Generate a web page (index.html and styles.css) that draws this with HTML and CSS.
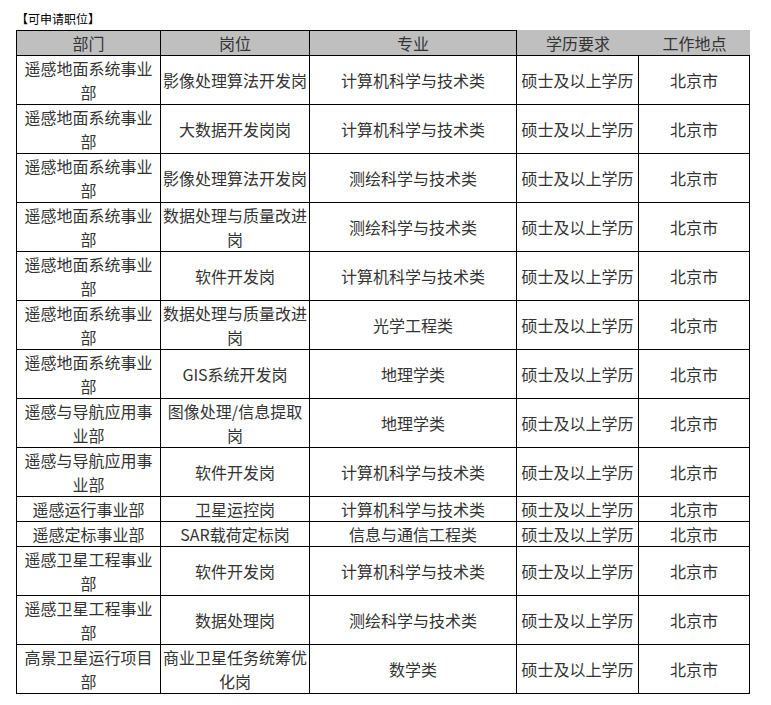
FILE: index.html
```html
<!DOCTYPE html>
<html lang="zh-CN">
<head>
<meta charset="utf-8">
<title>可申请职位</title>
<link rel="stylesheet" href="styles.css">
</head>
<body>
<div class="page">
  <p class="title">【可申请职位】</p>
  <table class="jobs">
    <thead>
      <tr>
        <th class="c1">部门</th>
        <th class="c2">岗位</th>
        <th class="c3">专业</th>
        <th class="c4 open">学历要求</th>
        <th class="c5 open">工作地点</th>
      </tr>
    </thead>
    <tbody>
      <tr><td>遥感地面系统事业部</td><td>影像处理算法开发岗</td><td>计算机科学与技术类</td><td>硕士及以上学历</td><td>北京市</td></tr>
      <tr><td>遥感地面系统事业部</td><td>大数据开发岗岗</td><td>计算机科学与技术类</td><td>硕士及以上学历</td><td>北京市</td></tr>
      <tr><td>遥感地面系统事业部</td><td>影像处理算法开发岗</td><td>测绘科学与技术类</td><td>硕士及以上学历</td><td>北京市</td></tr>
      <tr><td>遥感地面系统事业部</td><td>数据处理与质量改进岗</td><td>测绘科学与技术类</td><td>硕士及以上学历</td><td>北京市</td></tr>
      <tr><td>遥感地面系统事业部</td><td>软件开发岗</td><td>计算机科学与技术类</td><td>硕士及以上学历</td><td>北京市</td></tr>
      <tr><td>遥感地面系统事业部</td><td>数据处理与质量改进岗</td><td>光学工程类</td><td>硕士及以上学历</td><td>北京市</td></tr>
      <tr><td>遥感地面系统事业部</td><td>GIS系统开发岗</td><td>地理学类</td><td>硕士及以上学历</td><td>北京市</td></tr>
      <tr><td>遥感与导航应用事业部</td><td>图像处理/信息提取岗</td><td>地理学类</td><td>硕士及以上学历</td><td>北京市</td></tr>
      <tr><td>遥感与导航应用事业部</td><td>软件开发岗</td><td>计算机科学与技术类</td><td>硕士及以上学历</td><td>北京市</td></tr>
      <tr><td>遥感运行事业部</td><td>卫星运控岗</td><td>计算机科学与技术类</td><td>硕士及以上学历</td><td>北京市</td></tr>
      <tr><td>遥感定标事业部</td><td>SAR载荷定标岗</td><td>信息与通信工程类</td><td>硕士及以上学历</td><td>北京市</td></tr>
      <tr><td>遥感卫星工程事业部</td><td>软件开发岗</td><td>计算机科学与技术类</td><td>硕士及以上学历</td><td>北京市</td></tr>
      <tr><td>遥感卫星工程事业部</td><td>数据处理岗</td><td>测绘科学与技术类</td><td>硕士及以上学历</td><td>北京市</td></tr>
      <tr><td>高景卫星运行项目部</td><td>商业卫星任务统筹优化岗</td><td>数学类</td><td>硕士及以上学历</td><td>北京市</td></tr>
    </tbody>
  </table>
</div>
</body>
</html>
```

FILE: styles.css
```css
html, body {
  margin: 0;
  padding: 0;
  background: #ffffff;
}

.page {
  padding-left: 16px;
  font-family: "Microsoft YaHei", "Noto Sans CJK SC", "Noto Sans", sans-serif;
}

.title {
  margin: 9px 0 1px 0;
  font-size: 12px;
  line-height: 20px;
  color: #000000;
}

.jobs {
  border-collapse: separate;
  border-spacing: 0;
  table-layout: fixed;
  width: 734px;
  font-size: 16px;
  line-height: 24px;
  color: #333333;
}

.jobs th,
.jobs td {
  box-sizing: border-box;
  padding: 0;
  text-align: center;
  vertical-align: middle;
  font-weight: normal;
  border-right: 1px solid #000000;
  border-bottom: 1px solid #000000;
  word-break: break-all;
}

.jobs th {
  background: #bfbfbf;
  border-top: 1px solid #000000;
}

.jobs th:first-child,
.jobs td:first-child {
  border-left: 1px solid #000000;
}

.jobs th.open {
  border-top: none;
  border-right: none;
}

.c1 { width: 145px; }
.c2 { width: 149px; }
.c3 { width: 207px; }
.c4 { width: 122px; }
.c5 { width: 111px; }
```
